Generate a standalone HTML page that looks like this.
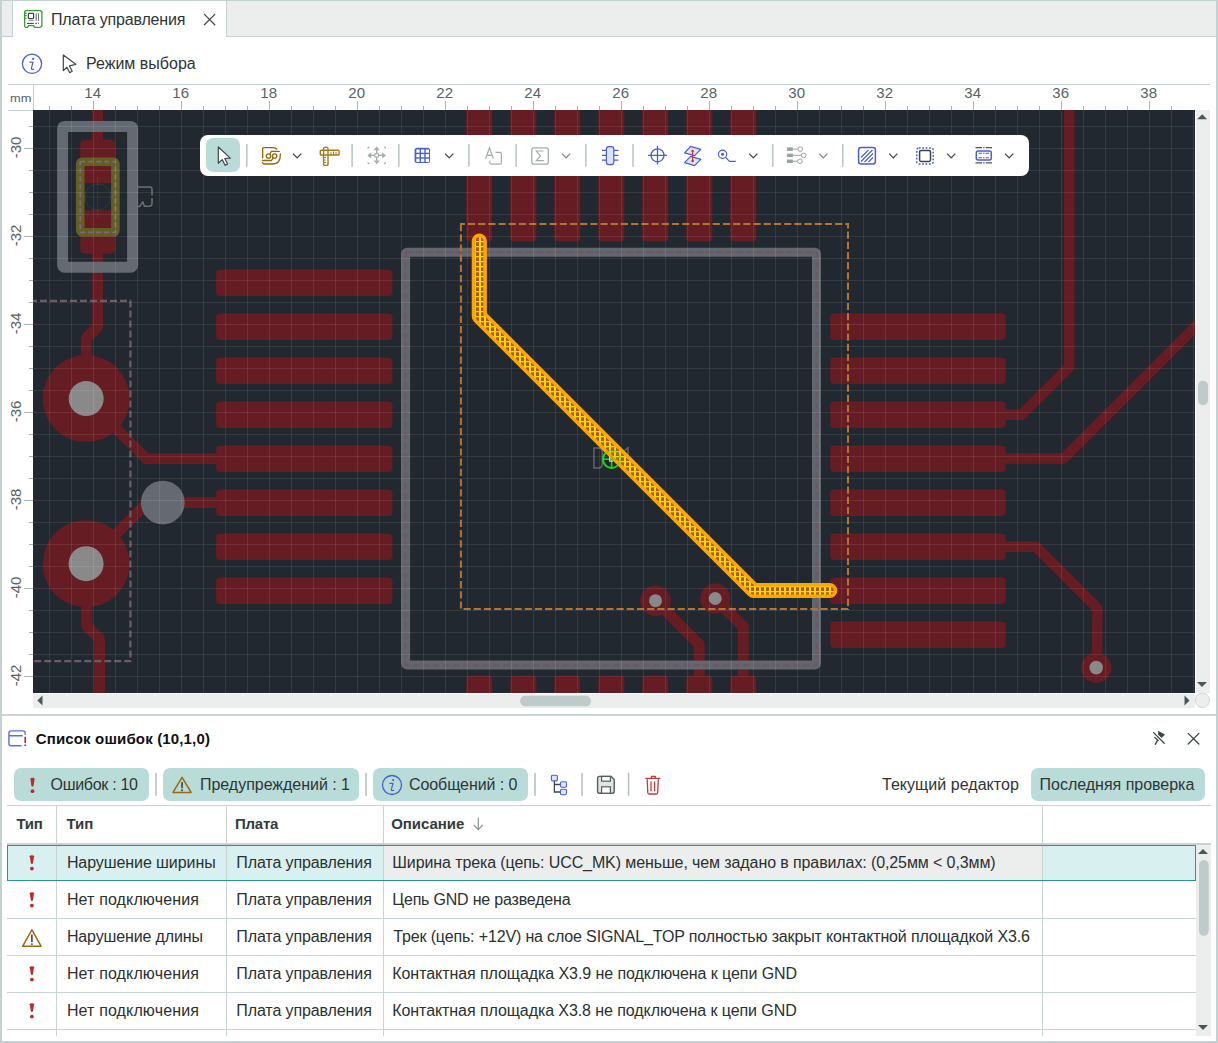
<!DOCTYPE html>
<html><head><meta charset="utf-8"><style>
html,body{margin:0;padding:0;}
body{width:1218px;height:1043px;position:relative;overflow:hidden;background:#fff;font-family:"Liberation Sans", sans-serif;}
</style></head><body>
<div style="position:absolute;left:0px;top:0px;width:1218px;height:37px;background:#ebeeed"></div><div style="position:absolute;left:0px;top:0px;width:1218px;height:1px;background:#c5d0d0"></div><div style="position:absolute;left:0px;top:36px;width:1218px;height:1px;background:#c5d0d0"></div><div style="position:absolute;left:12px;top:1px;width:214px;height:36px;background:#fff"></div><div style="position:absolute;left:12px;top:1px;width:1px;height:36px;background:#c5d0d0"></div><div style="position:absolute;left:226px;top:1px;width:1px;height:36px;background:#c5d0d0"></div><svg style="position:absolute;left:20px;top:6px;overflow:visible;" width="26" height="26" viewBox="20 6 26 26">
<path d="M25.5 10.7 H40.6 L41.9 12 V25.8 L40.3 27.4 H34.6 L33.4 25.6 H28.7 L27.5 27.4 H25.6 L24.6 26.4 V11.6 Z" fill="none" stroke="#3a9a3a" stroke-width="1.3" stroke-linejoin="round"/>
<path d="M24.8 13.4 h1.8 M24.8 15.6 h1.8 M24.8 18.2 h1.8" stroke="#2a8a2a" stroke-width="1.1"/>
<rect x="28.4" y="13.4" width="5.2" height="5.2" rx="0.8" fill="none" stroke="#3c4545" stroke-width="1.2"/>
<path d="M28.5 20.6 h5.3" stroke="#8a9393" stroke-width="1"/>
<path d="M27 23.4 h6.8" stroke="#3c4545" stroke-width="1.1"/>
<path d="M36.2 13.3 v7.5 M38.5 13.3 v7.5" stroke="#6a7373" stroke-width="1.1"/>
<path d="M35 23.4 h2 M38 23.4 h1" stroke="#6a7373" stroke-width="1.1"/>
</svg><div style="position:absolute;left:50.90px;top:12px;font-size:16px;line-height:16px;font-weight:400;color:#2d3535;letter-spacing:-0.173px;white-space:nowrap;">Плата управления</div><svg style="position:absolute;left:200px;top:12px;overflow:visible;" width="20" height="20" viewBox="200 12 20 20"><path d="M204.4 14.4 L214.8 24.8 M214.8 14.4 L204.4 24.8" stroke="#434b4b" stroke-width="1.3" stroke-linecap="round"/></svg><svg style="position:absolute;left:18px;top:50px;overflow:visible;" width="30" height="30" viewBox="18 50 30 30">
<circle cx="32" cy="63.8" r="9.6" fill="none" stroke="#4a5fcf" stroke-width="1.3"/>
<circle cx="33.2" cy="58.9" r="1.1" fill="#4a5fcf"/>
<path d="M29.9 62.2 H33 L31.4 68.2 Q31.1 69.5 32.4 69.3 L33.7 69.1" fill="none" stroke="#4a5fcf" stroke-width="1.2" stroke-linecap="round" stroke-linejoin="round"/>
</svg><svg style="position:absolute;left:58px;top:50px;overflow:visible;" width="24" height="26" viewBox="58 50 24 26"><path d="M63.3 55 L63.3 70.6 L66.9 67.2 L69.6 72.6 L72.2 71.3 L69.5 65.9 L75.8 64.3 Z" fill="#fff" stroke="#3d4848" stroke-width="1.2" stroke-linejoin="round"/></svg><div style="position:absolute;left:86.00px;top:56px;font-size:16px;line-height:16px;font-weight:400;color:#2d3535;letter-spacing:0.009px;white-space:nowrap;">Режим выбора</div><div style="position:absolute;left:8px;top:84px;width:1202px;height:1px;background:#c5d0d0"></div><div style="position:absolute;left:33px;top:85px;width:1px;height:25px;background:#c5d0d0"></div><div style="position:absolute;left:8px;top:110px;width:25px;height:1px;background:#c5d0d0"></div><div style="position:absolute;left:10.30px;top:93px;font-size:11px;line-height:11px;font-weight:400;color:#5a6262;letter-spacing:0.000px;white-space:nowrap;transform:scaleX(1.17);transform-origin:0 0">mm</div><svg style="position:absolute;left:0px;top:84px;overflow:visible;" width="1218" height="620" viewBox="0 84 1218 620"><rect x="49" y="106" width="1" height="4" fill="#a9b4b4"/><rect x="71" y="106" width="1" height="4" fill="#a9b4b4"/><rect x="93" y="101" width="1" height="9" fill="#a9b4b4"/><rect x="115" y="106" width="1" height="4" fill="#a9b4b4"/><rect x="137" y="106" width="1" height="4" fill="#a9b4b4"/><rect x="159" y="106" width="1" height="4" fill="#a9b4b4"/><rect x="181" y="101" width="1" height="9" fill="#a9b4b4"/><rect x="203" y="106" width="1" height="4" fill="#a9b4b4"/><rect x="225" y="106" width="1" height="4" fill="#a9b4b4"/><rect x="247" y="106" width="1" height="4" fill="#a9b4b4"/><rect x="269" y="101" width="1" height="9" fill="#a9b4b4"/><rect x="291" y="106" width="1" height="4" fill="#a9b4b4"/><rect x="313" y="106" width="1" height="4" fill="#a9b4b4"/><rect x="335" y="106" width="1" height="4" fill="#a9b4b4"/><rect x="357" y="101" width="1" height="9" fill="#a9b4b4"/><rect x="379" y="106" width="1" height="4" fill="#a9b4b4"/><rect x="401" y="106" width="1" height="4" fill="#a9b4b4"/><rect x="423" y="106" width="1" height="4" fill="#a9b4b4"/><rect x="445" y="101" width="1" height="9" fill="#a9b4b4"/><rect x="467" y="106" width="1" height="4" fill="#a9b4b4"/><rect x="489" y="106" width="1" height="4" fill="#a9b4b4"/><rect x="511" y="106" width="1" height="4" fill="#a9b4b4"/><rect x="533" y="101" width="1" height="9" fill="#a9b4b4"/><rect x="555" y="106" width="1" height="4" fill="#a9b4b4"/><rect x="577" y="106" width="1" height="4" fill="#a9b4b4"/><rect x="599" y="106" width="1" height="4" fill="#a9b4b4"/><rect x="621" y="101" width="1" height="9" fill="#a9b4b4"/><rect x="643" y="106" width="1" height="4" fill="#a9b4b4"/><rect x="665" y="106" width="1" height="4" fill="#a9b4b4"/><rect x="687" y="106" width="1" height="4" fill="#a9b4b4"/><rect x="709" y="101" width="1" height="9" fill="#a9b4b4"/><rect x="731" y="106" width="1" height="4" fill="#a9b4b4"/><rect x="753" y="106" width="1" height="4" fill="#a9b4b4"/><rect x="775" y="106" width="1" height="4" fill="#a9b4b4"/><rect x="797" y="101" width="1" height="9" fill="#a9b4b4"/><rect x="819" y="106" width="1" height="4" fill="#a9b4b4"/><rect x="841" y="106" width="1" height="4" fill="#a9b4b4"/><rect x="863" y="106" width="1" height="4" fill="#a9b4b4"/><rect x="885" y="101" width="1" height="9" fill="#a9b4b4"/><rect x="907" y="106" width="1" height="4" fill="#a9b4b4"/><rect x="929" y="106" width="1" height="4" fill="#a9b4b4"/><rect x="951" y="106" width="1" height="4" fill="#a9b4b4"/><rect x="973" y="101" width="1" height="9" fill="#a9b4b4"/><rect x="995" y="106" width="1" height="4" fill="#a9b4b4"/><rect x="1017" y="106" width="1" height="4" fill="#a9b4b4"/><rect x="1039" y="106" width="1" height="4" fill="#a9b4b4"/><rect x="1061" y="101" width="1" height="9" fill="#a9b4b4"/><rect x="1083" y="106" width="1" height="4" fill="#a9b4b4"/><rect x="1105" y="106" width="1" height="4" fill="#a9b4b4"/><rect x="1127" y="106" width="1" height="4" fill="#a9b4b4"/><rect x="1149" y="101" width="1" height="9" fill="#a9b4b4"/><rect x="1171" y="106" width="1" height="4" fill="#a9b4b4"/><rect x="29" y="126" width="4" height="1" fill="#a9b4b4"/><rect x="24" y="148" width="9" height="1" fill="#a9b4b4"/><rect x="29" y="170" width="4" height="1" fill="#a9b4b4"/><rect x="29" y="192" width="4" height="1" fill="#a9b4b4"/><rect x="29" y="214" width="4" height="1" fill="#a9b4b4"/><rect x="24" y="236" width="9" height="1" fill="#a9b4b4"/><rect x="29" y="258" width="4" height="1" fill="#a9b4b4"/><rect x="29" y="280" width="4" height="1" fill="#a9b4b4"/><rect x="29" y="302" width="4" height="1" fill="#a9b4b4"/><rect x="24" y="324" width="9" height="1" fill="#a9b4b4"/><rect x="29" y="346" width="4" height="1" fill="#a9b4b4"/><rect x="29" y="368" width="4" height="1" fill="#a9b4b4"/><rect x="29" y="390" width="4" height="1" fill="#a9b4b4"/><rect x="24" y="412" width="9" height="1" fill="#a9b4b4"/><rect x="29" y="434" width="4" height="1" fill="#a9b4b4"/><rect x="29" y="456" width="4" height="1" fill="#a9b4b4"/><rect x="29" y="478" width="4" height="1" fill="#a9b4b4"/><rect x="24" y="500" width="9" height="1" fill="#a9b4b4"/><rect x="29" y="522" width="4" height="1" fill="#a9b4b4"/><rect x="29" y="544" width="4" height="1" fill="#a9b4b4"/><rect x="29" y="566" width="4" height="1" fill="#a9b4b4"/><rect x="24" y="588" width="9" height="1" fill="#a9b4b4"/><rect x="29" y="610" width="4" height="1" fill="#a9b4b4"/><rect x="29" y="632" width="4" height="1" fill="#a9b4b4"/><rect x="29" y="654" width="4" height="1" fill="#a9b4b4"/><rect x="24" y="676" width="9" height="1" fill="#a9b4b4"/></svg><svg style="position:absolute;left:0px;top:84px;overflow:visible;" width="1218" height="620" viewBox="0 84 1218 620"><g font-family="Liberation Sans" font-size="15" fill="#5a6262"><text x="92.7" y="98" text-anchor="middle">14</text><text x="180.7" y="98" text-anchor="middle">16</text><text x="268.7" y="98" text-anchor="middle">18</text><text x="356.7" y="98" text-anchor="middle">20</text><text x="444.7" y="98" text-anchor="middle">22</text><text x="532.7" y="98" text-anchor="middle">24</text><text x="620.7" y="98" text-anchor="middle">26</text><text x="708.7" y="98" text-anchor="middle">28</text><text x="796.7" y="98" text-anchor="middle">30</text><text x="884.7" y="98" text-anchor="middle">32</text><text x="972.7" y="98" text-anchor="middle">34</text><text x="1060.7" y="98" text-anchor="middle">36</text><text x="1148.7" y="98" text-anchor="middle">38</text><text transform="translate(21 147.5) rotate(-90)" text-anchor="middle">-30</text><text transform="translate(21 235.5) rotate(-90)" text-anchor="middle">-32</text><text transform="translate(21 323.5) rotate(-90)" text-anchor="middle">-34</text><text transform="translate(21 411.5) rotate(-90)" text-anchor="middle">-36</text><text transform="translate(21 499.5) rotate(-90)" text-anchor="middle">-38</text><text transform="translate(21 587.5) rotate(-90)" text-anchor="middle">-40</text><text transform="translate(21 675.5) rotate(-90)" text-anchor="middle">-42</text></g></svg><svg style="position:absolute;left:33px;top:110px;overflow:visible;overflow:hidden" width="1162" height="583" viewBox="33 110 1162 583"><rect x="33" y="110" width="1162" height="583" fill="#22282f"/><path d="M97.6 104 L97.6 150" fill="none" stroke="#661c23" stroke-width="11" stroke-linejoin="round" stroke-linecap="butt"/><path d="M97.6 240 L97.6 327 L86.4 338.2 L86.4 398.6" fill="none" stroke="#661c23" stroke-width="11" stroke-linejoin="round" stroke-linecap="butt"/><path d="M86.2 398.6 L146.3 458.7 L216 458.7" fill="none" stroke="#661c23" stroke-width="10.5" stroke-linejoin="round" stroke-linecap="butt"/><path d="M86.1 563.7 L147.7 502.6 L216 502.6" fill="none" stroke="#661c23" stroke-width="10.8" stroke-linejoin="round" stroke-linecap="butt"/><path d="M86.7 563.7 L86.7 626 L99.6 639 L99.6 700" fill="none" stroke="#661c23" stroke-width="11" stroke-linejoin="round" stroke-linecap="butt"/><rect x="80.2" y="139.8" width="35.1" height="43.5" rx="5" fill="#661c23"/><rect x="80.2" y="210.2" width="35.1" height="43.6" rx="5" fill="#661c23"/><circle cx="86.2" cy="398.6" r="43.5" fill="#661c23"/><circle cx="86.2" cy="398.6" r="17.5" fill="#898989"/><circle cx="86.1" cy="563.7" r="43.5" fill="#661c23"/><circle cx="86.1" cy="563.7" r="17.5" fill="#898989"/><rect x="216.1" y="269.5" width="176.3" height="26.5" rx="4" fill="#661c23"/><rect x="216.1" y="313.5" width="176.3" height="26.5" rx="4" fill="#661c23"/><rect x="216.1" y="357.5" width="176.3" height="26.5" rx="4" fill="#661c23"/><rect x="216.1" y="401.5" width="176.3" height="26.5" rx="4" fill="#661c23"/><rect x="216.1" y="445.5" width="176.3" height="26.5" rx="4" fill="#661c23"/><rect x="216.1" y="489.5" width="176.3" height="26.5" rx="4" fill="#661c23"/><rect x="216.1" y="533.5" width="176.3" height="26.5" rx="4" fill="#661c23"/><rect x="216.1" y="577.5" width="176.3" height="26.5" rx="4" fill="#661c23"/><rect x="830.3" y="313.4" width="175.4" height="26.5" rx="4" fill="#661c23"/><rect x="830.3" y="357.4" width="175.4" height="26.5" rx="4" fill="#661c23"/><rect x="830.3" y="401.4" width="175.4" height="26.5" rx="4" fill="#661c23"/><rect x="830.3" y="445.4" width="175.4" height="26.5" rx="4" fill="#661c23"/><rect x="830.3" y="489.4" width="175.4" height="26.5" rx="4" fill="#661c23"/><rect x="830.3" y="533.4" width="175.4" height="26.5" rx="4" fill="#661c23"/><rect x="830.3" y="577.4" width="175.4" height="26.5" rx="4" fill="#661c23"/><rect x="830.3" y="621.4" width="175.4" height="26.5" rx="4" fill="#661c23"/><rect x="466.3" y="96" width="26" height="145.5" rx="4" fill="#661c23"/><rect x="466.3" y="675.7" width="26" height="40" rx="4" fill="#661c23"/><rect x="510.3" y="96" width="26" height="145.5" rx="4" fill="#661c23"/><rect x="510.3" y="675.7" width="26" height="40" rx="4" fill="#661c23"/><rect x="554.3" y="96" width="26" height="145.5" rx="4" fill="#661c23"/><rect x="554.3" y="675.7" width="26" height="40" rx="4" fill="#661c23"/><rect x="598.3" y="96" width="26" height="145.5" rx="4" fill="#661c23"/><rect x="598.3" y="675.7" width="26" height="40" rx="4" fill="#661c23"/><rect x="642.3" y="96" width="26" height="145.5" rx="4" fill="#661c23"/><rect x="642.3" y="675.7" width="26" height="40" rx="4" fill="#661c23"/><rect x="686.3" y="96" width="26" height="145.5" rx="4" fill="#661c23"/><rect x="686.3" y="675.7" width="26" height="40" rx="4" fill="#661c23"/><rect x="730.3" y="96" width="26" height="145.5" rx="4" fill="#661c23"/><rect x="730.3" y="675.7" width="26" height="40" rx="4" fill="#661c23"/><path d="M655.5 600.7 L699.2 644.4 L699.2 700" fill="none" stroke="#661c23" stroke-width="11" stroke-linejoin="round" stroke-linecap="butt"/><path d="M715.2 598.5 L743.2 626.5 L743.2 700" fill="none" stroke="#661c23" stroke-width="11" stroke-linejoin="round" stroke-linecap="butt"/><path d="M1069.2 100 L1069.2 367 L1021.5 414.7 L1000 414.7" fill="none" stroke="#661c23" stroke-width="10.5" stroke-linejoin="round" stroke-linecap="butt"/><path d="M1000 458.4 L1063.7 458.4 L1215 307.1" fill="none" stroke="#661c23" stroke-width="10.5" stroke-linejoin="round" stroke-linecap="butt"/><path d="M1000 546.8 L1036 546.8 L1097.4 608.4 L1097 667.6" fill="none" stroke="#661c23" stroke-width="10.5" stroke-linejoin="round" stroke-linecap="butt"/><circle cx="655.5" cy="600.7" r="15.3" fill="#661c23"/><circle cx="655.5" cy="600.7" r="6.5" fill="#898989"/><circle cx="715.2" cy="598.5" r="15.1" fill="#661c23"/><circle cx="715.2" cy="598.5" r="6.5" fill="#898989"/><circle cx="1096.2" cy="667.6" r="15.1" fill="#661c23"/><circle cx="1096.2" cy="667.6" r="6.8" fill="#898989"/><circle cx="162.8" cy="502.6" r="21.9" fill="#656a72"/><path d="M20 300.8 H130.4 V661.2 H20" fill="none" stroke="#6b5c65" stroke-width="2.2" stroke-dasharray="7 3"/><rect x="62.6" y="126.4" width="70" height="140.9" rx="2" fill="none" stroke="#656a72" stroke-width="11"/><rect x="80.2" y="161.7" width="35.2" height="70.6" rx="2" fill="none" stroke="#625f22" stroke-width="8.6"/><rect x="80.2" y="161.7" width="35.2" height="70.6" fill="none" stroke="#7d6b7b" stroke-width="1.8" stroke-dasharray="5 3"/><circle cx="97.7" cy="197" r="13" fill="none" stroke="#ffffff" stroke-opacity="0.07" stroke-width="1"/><path d="M97.7 176 V218 M82 197 H113" stroke="#ffffff" stroke-opacity="0.07" stroke-width="1"/><path d="M137 187 H150 Q152 187 152 189.5 V195.4 M152 198 V203.5 Q152 206.2 149.3 206.2 H144.4 L142.8 201.8 L139.6 206.5 H137" fill="none" stroke="#6b7070" stroke-width="1.5" stroke-linejoin="round"/><rect x="405.6" y="252.3" width="410.9" height="412.8" rx="1.5" fill="none" stroke="#62676e" stroke-width="9"/><path d="M405.6 252.3 V665.1 H816.5 V252.3 Z" fill="none" stroke="#6c5865" stroke-width="2.2" stroke-dasharray="6.8 3.2"/><path d="M460.9 224 V609 H848 V224 Z" fill="none" stroke="#b3742f" stroke-width="2" stroke-dasharray="7.2 3"/><path d="M593.9 447.9 H598.5 Q602.3 447.9 602.3 452.5 V463.5 Q602.3 468 598.5 468 H593.9 Z" fill="none" stroke="#5f6365" stroke-width="1.5"/><path d="M624.5 450.5 L628 447.8 V468" fill="none" stroke="#5f6365" stroke-width="1.5"/><circle cx="611.6" cy="459.2" r="8.7" fill="none" stroke="#22cc22" stroke-width="2"/><path d="M602.5 459.2 H620.5 M611.6 450.5 V468" stroke="#22cc22" stroke-width="1.5"/><path d="M49.5 110V693 M71.5 110V693 M93.5 110V693 M115.5 110V693 M137.5 110V693 M159.5 110V693 M181.5 110V693 M203.5 110V693 M225.5 110V693 M247.5 110V693 M269.5 110V693 M291.5 110V693 M313.5 110V693 M335.5 110V693 M357.5 110V693 M379.5 110V693 M401.5 110V693 M423.5 110V693 M445.5 110V693 M467.5 110V693 M489.5 110V693 M511.5 110V693 M533.5 110V693 M555.5 110V693 M577.5 110V693 M599.5 110V693 M621.5 110V693 M643.5 110V693 M665.5 110V693 M687.5 110V693 M709.5 110V693 M731.5 110V693 M753.5 110V693 M775.5 110V693 M797.5 110V693 M819.5 110V693 M841.5 110V693 M863.5 110V693 M885.5 110V693 M907.5 110V693 M929.5 110V693 M951.5 110V693 M973.5 110V693 M995.5 110V693 M1017.5 110V693 M1039.5 110V693 M1061.5 110V693 M1083.5 110V693 M1105.5 110V693 M1127.5 110V693 M1149.5 110V693 M1171.5 110V693 M1193.5 110V693 M33 126.5H1195 M33 148.5H1195 M33 170.5H1195 M33 192.5H1195 M33 214.5H1195 M33 236.5H1195 M33 258.5H1195 M33 280.5H1195 M33 302.5H1195 M33 324.5H1195 M33 346.5H1195 M33 368.5H1195 M33 390.5H1195 M33 412.5H1195 M33 434.5H1195 M33 456.5H1195 M33 478.5H1195 M33 500.5H1195 M33 522.5H1195 M33 544.5H1195 M33 566.5H1195 M33 588.5H1195 M33 610.5H1195 M33 632.5H1195 M33 654.5H1195 M33 676.5H1195" stroke="#ffffff" stroke-opacity="0.085" stroke-width="1"/><defs><pattern id="hatch" patternUnits="userSpaceOnUse" x="-1" y="1" width="5" height="5"><rect width="5" height="5" fill="#aa5a10"/><rect width="2" height="5" fill="#ffd700"/><rect width="5" height="1.3" fill="#ffd700"/></pattern></defs><path d="M479.3 241 L479.3 316.3 L753.5 590.5 L829.7 590.5" fill="none" stroke="#ffa400" stroke-width="15.2" stroke-linejoin="round" stroke-linecap="round"/><path d="M479.3 241 L479.3 316.3 L753.5 590.5 L829.7 590.5" fill="none" stroke="url(#hatch)" stroke-width="8" stroke-linejoin="round" stroke-linecap="round"/><g opacity="0.4"><circle cx="611.6" cy="459.2" r="8.7" fill="none" stroke="#22cc22" stroke-width="2"/><path d="M602.5 459.2 H620.5 M611.6 450.5 V468" stroke="#22cc22" stroke-width="1.5"/></g><path d="M609.6 456.6 V461.2 H613" fill="none" stroke="#e8ffe8" stroke-width="1.2" opacity="0.8"/></svg><div style="position:absolute;left:1196px;top:110px;width:14px;height:583px;background:#ebeeed"></div><div style="position:absolute;left:33px;top:693.5px;width:1162px;height:14.3px;background:#ebeeed"></div><svg style="position:absolute;left:1190px;top:105px;overflow:visible;" width="28" height="600" viewBox="1190 105 28 600">
<path d="M1197.2 119.3 L1202.2 114.2 L1207.2 119.3 Z" fill="#4d5757"/>
<rect x="1198" y="380.7" width="10" height="24.4" rx="5" fill="#bfcaca"/>
<path d="M1197 682 L1202 687.1 L1207 682 Z" fill="#4d5757"/>
<circle cx="1202.4" cy="700.4" r="7.2" fill="#ebeeed" stroke="#c9d3d3" stroke-width="0.9"/>
</svg><svg style="position:absolute;left:30px;top:690px;overflow:visible;" width="1170" height="20" viewBox="30 690 1170 20">
<path d="M42.5 695.5 L37.4 700.5 L42.5 705.5 Z" fill="#4d5757"/>
<rect x="520.1" y="695.8" width="70.9" height="10.4" rx="5.2" fill="#bfcaca"/>
<path d="M1184.5 695.5 L1189.6 700.5 L1184.5 705.5 Z" fill="#4d5757"/>
</svg><div style="position:absolute;left:200px;top:135px;width:829px;height:41px;background:#fff;border-radius:8px"></div><div style="position:absolute;left:206.4px;top:138.4px;width:34px;height:33.8px;background:#b9dcd9;border-radius:7px"></div><svg style="position:absolute;left:195px;top:130px;overflow:visible;" width="840" height="52" viewBox="195 130 840 52"><rect x="246.05" y="144" width="1.5" height="22.8" fill="#b9c4c4"/><rect x="351.35" y="144" width="1.5" height="22.8" fill="#b9c4c4"/><rect x="398.05" y="144" width="1.5" height="22.8" fill="#b9c4c4"/><rect x="468.15" y="144" width="1.5" height="22.8" fill="#b9c4c4"/><rect x="515.35" y="144" width="1.5" height="22.8" fill="#b9c4c4"/><rect x="585.15" y="144" width="1.5" height="22.8" fill="#b9c4c4"/><rect x="632.25" y="144" width="1.5" height="22.8" fill="#b9c4c4"/><rect x="772.05" y="144" width="1.5" height="22.8" fill="#b9c4c4"/><rect x="842.05" y="144" width="1.5" height="22.8" fill="#b9c4c4"/><path d="M218.3 147 L218.3 163.3 L222.2 159.6 L225.1 165.3 L227.6 164.1 L224.8 158.5 L230.3 158.1 Z" fill="#fff" stroke="#3d4848" stroke-width="1.2" stroke-linejoin="round"/><g fill="none" stroke="#8f6a14" stroke-width="1.3" stroke-linecap="round" stroke-linejoin="round">
<path d="M262.7 157.8 V148.6 Q262.7 147.6 263.8 147.6 H273.2 Q275.3 147.8 276.7 149"/>
<path d="M280.4 154 Q280.6 164 272.6 164 H263.8 L262.5 162.8"/>
<circle cx="268.5" cy="156" r="2.2"/><circle cx="274.6" cy="156" r="2.2"/>
<path d="M269.8 154.2 L271.4 151.4 H279.3 M273.3 157.8 L271.6 160.5 H262.4"/>
</g><path d="M293 153.6 L297.1 157.9 L301.2 153.6" fill="none" stroke="#3d4848" stroke-width="1.3"/><g fill="none" stroke="#a97a1c" stroke-width="1.4" stroke-linejoin="round">
<rect x="323.6" y="147.4" width="4.4" height="18" rx="0.8"/>
<rect x="320.3" y="150.2" width="18.8" height="4.8" rx="0.8"/>
<path d="M331 152.2 V155 M333.5 151.5 V155 M336 152.2 V155 M323.6 157.5 H326 M323.6 160 H325.5 M323.6 162.5 H326" stroke-width="1"/>
</g><g fill="#a3adad">
<path d="M376.7 146.5 L379.8 150.3 H373.6 Z M376.7 164.3 L379.8 160.5 H373.6 Z M367.4 155.4 L371.2 152.3 V158.5 Z M386 155.4 L382.2 152.3 V158.5 Z"/>
<rect x="371" y="154.7" width="11.4" height="1.3"/><rect x="376" y="150" width="1.3" height="10.8"/>
</g>
<rect x="375" y="153.7" width="3.4" height="3.4" fill="#fff" stroke="#a3adad" stroke-width="1"/>
<path d="M368 147.3 h1.5 M368 147.3 v1.5 M385.4 147.3 h-1.5 M385.4 147.3 v1.5 M368 163.5 h1.5 M368 163.5 v-1.5 M385.4 163.5 h-1.5 M385.4 163.5 v-1.5" stroke="#a3adad" stroke-width="1"/><rect x="414.6" y="147.8" width="15.4" height="15.2" rx="2.5" fill="#4a5fcf"/>
<g fill="#fff"><rect x="416.3" y="149.5" width="3.3" height="3.2"/><rect x="416.3" y="154.1" width="3.3" height="3.2"/><rect x="416.3" y="158.7" width="3.3" height="3.2"/><rect x="421.0" y="149.5" width="3.3" height="3.2"/><rect x="421.0" y="154.1" width="3.3" height="3.2"/><rect x="421.0" y="158.7" width="3.3" height="3.2"/><rect x="425.7" y="149.5" width="3.3" height="3.2"/><rect x="425.7" y="154.1" width="3.3" height="3.2"/><rect x="425.7" y="158.7" width="3.3" height="3.2"/></g><path d="M445.1 153.6 L449.20000000000005 157.9 L453.3 153.6" fill="none" stroke="#3d4848" stroke-width="1.3"/><g fill="none" stroke="#a3adad" stroke-width="1.2">
<path d="M485.6 158.8 L489.5 147.8 L493.4 158.8 M486.8 155.4 H492.2"/>
<path d="M495.5 152.4 H500 Q501.4 152.4 501.4 153.8 V162.7 Q501.4 164.1 500 164.1 H491.2 Q489.8 164.1 489.8 162.7 V160.8"/>
</g><rect x="531.8" y="147.8" width="16.5" height="16.3" rx="2.2" fill="none" stroke="#a3adad" stroke-width="1.3"/>
<path d="M543.5 151 H536.3 L540.4 155.9 L536.3 160.6 H543.8" fill="none" stroke="#a3adad" stroke-width="1.2"/><path d="M562 153.6 L566.1 157.9 L570.2 153.6" fill="none" stroke="#7e8888" stroke-width="1.3"/><path d="M602 150.3 H618.4 M602 155.4 H618.4 M602 160.2 H618.4" stroke="#4a5fcf" stroke-width="1.2"/>
<rect x="606.4" y="146.6" width="7.4" height="18" rx="2.4" fill="#dce3fa" stroke="#4a5fcf" stroke-width="1.2"/><circle cx="657.5" cy="155.3" r="6.5" fill="none" stroke="#4a5fcf" stroke-width="1.3"/>
<path d="M648.1 155.3 H667 M657.5 146 V164.6" stroke="#4a5fcf" stroke-width="1.3"/><g fill="#dce3fa" stroke="#4a5fcf" stroke-width="1.2" stroke-linejoin="round">
<path d="M684.6 152.8 L690.6 146.4 L700.8 149.4 L694.6 155.7 Z"/>
<path d="M684.6 162.6 L690.6 156.4 L700.8 159.4 L694.6 165.6 Z"/>
</g>
<path d="M692.6 150.8 V161" stroke="#c83232" stroke-width="1.2"/>
<circle cx="692.6" cy="151" r="1.3" fill="#c83232"/><circle cx="692.6" cy="161" r="1.3" fill="#c83232"/><circle cx="722.6" cy="154.3" r="4.1" fill="none" stroke="#4a5fcf" stroke-width="1.2"/>
<circle cx="722.6" cy="154.3" r="1.5" fill="#4a5fcf"/>
<path d="M725.6 157.3 L729.5 161.4 H735.8" fill="none" stroke="#4a5fcf" stroke-width="1.2"/><path d="M749.2 153.6 L753.3000000000001 157.9 L757.4000000000001 153.6" fill="none" stroke="#3d4848" stroke-width="1.3"/><g fill="#9aa3a3">
<rect x="786.9" y="147.4" width="6" height="3.5"/><rect x="786.9" y="153.6" width="6" height="3.5"/><rect x="786.9" y="159.5" width="6" height="3.5"/>
</g>
<g fill="none" stroke="#9aa3a3" stroke-width="1">
<path d="M792.9 149.1 H797.9 M792.9 155.3 H801.3 M792.9 161.2 H797.6"/>
<circle cx="800.3" cy="149.1" r="2.3"/><circle cx="803.7" cy="155.3" r="2.3"/><circle cx="800" cy="161.2" r="2.3"/>
</g><path d="M819.2 153.6 L823.3000000000001 157.9 L827.4000000000001 153.6" fill="none" stroke="#7e8888" stroke-width="1.3"/><rect x="858.6" y="147.6" width="16.8" height="16.4" rx="2.5" fill="none" stroke="#4a5fcf" stroke-width="1.5"/>
<path d="M861 157.5 L868.5 150 M861 161.5 L872.5 150 M864.5 162 L873 153.5 M868.5 162 L873 157.5" stroke="#4a5fcf" stroke-width="1.1"/><path d="M889.2 153.6 L893.3000000000001 157.9 L897.4000000000001 153.6" fill="none" stroke="#3d4848" stroke-width="1.3"/><rect x="916.8" y="147.9" width="16.4" height="16" rx="2" fill="none" stroke="#4a5fcf" stroke-width="1.5" stroke-dasharray="1.8 1.6"/>
<rect x="919.6" y="150.6" width="10.9" height="10.8" rx="1.3" fill="none" stroke="#3d4545" stroke-width="1.5"/><path d="M947.1 153.6 L951.2 157.9 L955.3000000000001 153.6" fill="none" stroke="#3d4848" stroke-width="1.3"/><rect x="976.3" y="150.9" width="15" height="9" rx="1.8" fill="none" stroke="#4a5fcf" stroke-width="1.5"/>
<path d="M975.5 147.6 H982 M983.2 147.6 H984.6 M985.8 147.6 H992 M975.5 162.9 H982 M983.2 162.9 H984.6 M985.8 162.9 H992" stroke="#4d5555" stroke-width="1.4"/>
<path d="M978.5 153.2 H982 M983 153.2 H984.5 M985.5 153.2 H989 M978.5 157.7 H982 M983 157.7 H984.5 M985.5 157.7 H989" stroke="#5d6565" stroke-width="1.1"/><path d="M1005 153.6 L1009.1 157.9 L1013.2 153.6" fill="none" stroke="#3d4848" stroke-width="1.3"/></svg><div style="position:absolute;left:2px;top:714px;width:1214px;height:2px;background:#c9d3d3"></div><svg style="position:absolute;left:4px;top:724px;overflow:visible;" width="30" height="30" viewBox="4 724 30 30">
<path d="M25.2 734.8 V733.2 Q25.2 730.9 22.9 730.9 H11.2 Q8.9 730.9 8.9 733.2 V743.5 Q8.9 745.8 11.2 745.8 H21.5 M8.9 735.7 H22.8" fill="none" stroke="#5a70d0" stroke-width="1.4"/>
<path d="M25.2 737.4 V742.5" stroke="#b82a2a" stroke-width="1.6" stroke-linecap="round"/>
<circle cx="25.2" cy="745.2" r="0.9" fill="#b82a2a"/>
</svg><div style="position:absolute;left:35.75px;top:731px;font-size:15px;line-height:15px;font-weight:700;color:#111;letter-spacing:0.150px;white-space:nowrap;">Список ошибок (10,1,0)</div><svg style="position:absolute;left:1145px;top:725px;overflow:visible;" width="65" height="25" viewBox="1145 725 65 25">
<path d="M1158.4 731.4 L1164.6 734.7 L1161.5 737.6 L1158.5 734.5 Z" fill="#3d4545" stroke="#3d4545" stroke-width="0.8" stroke-linejoin="round"/>
<path d="M1153.6 732.6 L1164.2 743.2" stroke="#3d4545" stroke-width="1.3" stroke-linecap="round"/>
<path d="M1154.8 737.6 L1158.2 740.4 M1157.4 740.6 L1155.3 744.4" stroke="#3d4545" stroke-width="1.3" stroke-linecap="round"/>
<path d="M1188.2 733.4 L1198.9 744 M1198.9 733.4 L1188.2 744" stroke="#3d4545" stroke-width="1.3" stroke-linecap="round"/>
</svg><div style="position:absolute;left:14px;top:767.5px;width:135.3px;height:33.8px;background:#b9dcd9;border-radius:7px"></div><div style="position:absolute;left:162.6px;top:767.5px;width:196.5px;height:33.8px;background:#b9dcd9;border-radius:7px"></div><div style="position:absolute;left:372.6px;top:767.5px;width:155.7px;height:33.8px;background:#b9dcd9;border-radius:7px"></div><div style="position:absolute;left:1030.6px;top:767.5px;width:174.2px;height:33.7px;background:#b9dcd9;border-radius:7px"></div><svg style="position:absolute;left:0px;top:760px;overflow:visible;" width="700" height="45" viewBox="0 760 700 45"><rect x="155.25" y="773" width="1.5" height="22.8" fill="#b3bebe"/><rect x="365.25" y="773" width="1.5" height="22.8" fill="#b3bebe"/><rect x="534.25" y="773" width="1.5" height="22.8" fill="#b3bebe"/><rect x="581.25" y="773" width="1.5" height="22.8" fill="#b3bebe"/><rect x="627.85" y="773" width="1.5" height="22.8" fill="#b3bebe"/><path d="M30.35 778.9000000000001 Q30.35 777.7 32.5 777.7 Q34.65 777.7 34.65 778.9000000000001 L33.55 785.9000000000001 Q32.5 787.0 31.45 785.9000000000001 Z" fill="#bd2a2c"/><circle cx="32.5" cy="791.1500000000001" r="1.9" fill="#bd2a2c"/><path d="M182.05 777.3 L191.1 792.4000000000001 H173.0 Z" fill="none" stroke="#9a6a12" stroke-width="1.5" stroke-linejoin="round"/><path d="M182.05 782.0 V788.2" stroke="#3a4040" stroke-width="1.6"/><circle cx="182.05" cy="790.3000000000001" r="0.95" fill="#3a4040"/><circle cx="392" cy="785" r="9.5" fill="none" stroke="#4a5fcf" stroke-width="1.3"/>
<circle cx="393.2" cy="780.1" r="1.1" fill="#4a5fcf"/>
<path d="M389.9 783.4 H393 L391.4 789.4 Q391.1 790.7 392.4 790.5 L393.7 790.3" fill="none" stroke="#4a5fcf" stroke-width="1.2" stroke-linecap="round" stroke-linejoin="round"/><path d="M554.4 781 V792 H560.3 M554.4 784.5 H560.3" fill="none" stroke="#3d4545" stroke-width="1.3"/>
<g fill="#dce3fa" stroke="#4a5fcf" stroke-width="1.1">
<rect x="551.4" y="775.3" width="6" height="5.6" rx="1.2"/>
<rect x="560.5" y="781.7" width="6" height="5.6" rx="1.2"/>
<rect x="560.5" y="789.2" width="6" height="5.6" rx="1.2"/>
</g><path d="M599 776.4 H611.2 L614.2 779.4 V791.4 Q614.2 793.2 612.4 793.2 H599.4 Q597.6 793.2 597.6 791.4 V778.2 Q597.6 776.4 599.4 776.4 Z" fill="#dfe5e5" stroke="#555e5e" stroke-width="1.4" stroke-linejoin="round"/>
<rect x="601.6" y="776.4" width="8.8" height="4.8" fill="#fff" stroke="#555e5e" stroke-width="1.2"/>
<rect x="601.6" y="786.8" width="8.8" height="6.4" fill="#fff" stroke="#555e5e" stroke-width="1.2"/><g fill="none" stroke="#c0393b" stroke-width="1.3" stroke-linejoin="round">
<path d="M645.3 778.4 H660.3 M651.4 778.2 V776.3 H655.3 V778.2"/>
<path d="M647.2 779.3 L647.8 792.8 Q647.9 794 649.1 794 H656.4 Q657.6 794 657.7 792.8 L658.3 779.3"/>
<path d="M651 781.5 V791.2 M654.6 781.5 V791.2"/>
</g></svg><div style="position:absolute;left:50.50px;top:777px;font-size:16px;line-height:16px;font-weight:400;color:#2d3535;letter-spacing:-0.300px;white-space:nowrap;">Ошибок : 10</div><div style="position:absolute;left:200.00px;top:777px;font-size:16px;line-height:16px;font-weight:400;color:#2d3535;letter-spacing:-0.029px;white-space:nowrap;">Предупреждений : 1</div><div style="position:absolute;left:409.00px;top:777px;font-size:16px;line-height:16px;font-weight:400;color:#2d3535;letter-spacing:-0.083px;white-space:nowrap;">Сообщений : 0</div><div style="position:absolute;left:882.00px;top:777px;font-size:16px;line-height:16px;font-weight:400;color:#2d3535;letter-spacing:0.040px;white-space:nowrap;">Текущий редактор</div><div style="position:absolute;left:1039.60px;top:777px;font-size:16px;line-height:16px;font-weight:400;color:#2d3535;letter-spacing:-0.018px;white-space:nowrap;">Последняя проверка</div><div style="position:absolute;left:7px;top:805px;width:1204px;height:1px;background:#c9d3d3"></div><div style="position:absolute;left:7px;top:842.5px;width:1204px;height:2px;background:#c9d3d3"></div><div style="position:absolute;left:56px;top:806px;width:1px;height:230px;background:#c9d3d3"></div><div style="position:absolute;left:226px;top:806px;width:1px;height:230px;background:#c9d3d3"></div><div style="position:absolute;left:383px;top:806px;width:1px;height:230px;background:#c9d3d3"></div><div style="position:absolute;left:1042px;top:806px;width:1px;height:230px;background:#c9d3d3"></div><div style="position:absolute;left:16.40px;top:816px;font-size:15px;line-height:15px;font-weight:700;color:#333b3b;letter-spacing:-0.250px;white-space:nowrap;">Тип</div><div style="position:absolute;left:66.50px;top:816px;font-size:15px;line-height:15px;font-weight:700;color:#333b3b;letter-spacing:-0.050px;white-space:nowrap;">Тип</div><div style="position:absolute;left:235.00px;top:816px;font-size:15px;line-height:15px;font-weight:700;color:#333b3b;letter-spacing:-0.250px;white-space:nowrap;">Плата</div><div style="position:absolute;left:391.20px;top:816px;font-size:15px;line-height:15px;font-weight:700;color:#333b3b;letter-spacing:-0.043px;white-space:nowrap;">Описание</div><svg style="position:absolute;left:470px;top:815px;overflow:visible;" width="20" height="20" viewBox="470 815 20 20"><path d="M478.3 817.5 V829.5 M473.8 825 L478.3 829.6 L482.8 825" fill="none" stroke="#8a9494" stroke-width="1.2"/></svg><div style="position:absolute;left:7.5px;top:845px;width:1187.5px;height:35.8px;background:#d8f0ef"></div><div style="position:absolute;left:383.5px;top:845px;width:659px;height:35.8px;background:#ebeeed"></div><div style="position:absolute;left:56px;top:845px;width:1px;height:36px;background:#c9d3d3"></div><div style="position:absolute;left:226px;top:845px;width:1px;height:36px;background:#c9d3d3"></div><div style="position:absolute;left:383px;top:845px;width:1px;height:36px;background:#c9d3d3"></div><div style="position:absolute;left:1042px;top:845px;width:1px;height:36px;background:#c9d3d3"></div><div style="position:absolute;left:7px;top:844.5px;width:1188.5px;height:36.8px;border:1px solid #2a948f;box-sizing:border-box"></div><div style="position:absolute;left:7px;top:918px;width:1189px;height:1px;background:#c9d3d3"></div><div style="position:absolute;left:7px;top:955px;width:1189px;height:1px;background:#c9d3d3"></div><div style="position:absolute;left:7px;top:992px;width:1189px;height:1px;background:#c9d3d3"></div><div style="position:absolute;left:7px;top:1029px;width:1189px;height:1px;background:#c9d3d3"></div><div style="position:absolute;left:66.90px;top:855px;font-size:16px;line-height:16px;font-weight:400;color:#2b3030;letter-spacing:-0.080px;white-space:nowrap;">Нарушение ширины</div><div style="position:absolute;left:236.30px;top:855px;font-size:16px;line-height:16px;font-weight:400;color:#2b3030;letter-spacing:-0.107px;white-space:nowrap;">Плата управления</div><div style="position:absolute;left:392.30px;top:855px;font-size:16px;line-height:16px;font-weight:400;color:#2b3030;letter-spacing:-0.105px;white-space:nowrap;">Ширина трека (цепь: UCC_MK) меньше, чем задано в правилах: (0,25мм &lt; 0,3мм)</div><div style="position:absolute;left:66.90px;top:892px;font-size:16px;line-height:16px;font-weight:400;color:#2b3030;letter-spacing:0.136px;white-space:nowrap;">Нет подключения</div><div style="position:absolute;left:236.30px;top:892px;font-size:16px;line-height:16px;font-weight:400;color:#2b3030;letter-spacing:-0.107px;white-space:nowrap;">Плата управления</div><div style="position:absolute;left:392.30px;top:892px;font-size:16px;line-height:16px;font-weight:400;color:#2b3030;letter-spacing:-0.195px;white-space:nowrap;">Цепь GND не разведена</div><div style="position:absolute;left:66.90px;top:929px;font-size:16px;line-height:16px;font-weight:400;color:#2b3030;letter-spacing:-0.129px;white-space:nowrap;">Нарушение длины</div><div style="position:absolute;left:236.30px;top:929px;font-size:16px;line-height:16px;font-weight:400;color:#2b3030;letter-spacing:-0.107px;white-space:nowrap;">Плата управления</div><div style="position:absolute;left:393.30px;top:929px;font-size:16px;line-height:16px;font-weight:400;color:#2b3030;letter-spacing:-0.151px;white-space:nowrap;">Трек (цепь: +12V) на слое SIGNAL_TOP полностью закрыт контактной площадкой X3.6</div><div style="position:absolute;left:66.90px;top:966px;font-size:16px;line-height:16px;font-weight:400;color:#2b3030;letter-spacing:0.136px;white-space:nowrap;">Нет подключения</div><div style="position:absolute;left:236.30px;top:966px;font-size:16px;line-height:16px;font-weight:400;color:#2b3030;letter-spacing:-0.107px;white-space:nowrap;">Плата управления</div><div style="position:absolute;left:392.30px;top:966px;font-size:16px;line-height:16px;font-weight:400;color:#2b3030;letter-spacing:-0.071px;white-space:nowrap;">Контактная площадка X3.9 не подключена к цепи GND</div><div style="position:absolute;left:66.90px;top:1003px;font-size:16px;line-height:16px;font-weight:400;color:#2b3030;letter-spacing:0.136px;white-space:nowrap;">Нет подключения</div><div style="position:absolute;left:236.30px;top:1003px;font-size:16px;line-height:16px;font-weight:400;color:#2b3030;letter-spacing:-0.107px;white-space:nowrap;">Плата управления</div><div style="position:absolute;left:392.30px;top:1003px;font-size:16px;line-height:16px;font-weight:400;color:#2b3030;letter-spacing:-0.079px;white-space:nowrap;">Контактная площадка X3.8 не подключена к цепи GND</div><svg style="position:absolute;left:0px;top:845px;overflow:visible;" width="60" height="190" viewBox="0 845 60 190"><path d="M29.75 856.35 Q29.75 855.15 31.9 855.15 Q34.05 855.15 34.05 856.35 L32.949999999999996 863.35 Q31.9 864.4499999999999 30.849999999999998 863.35 Z" fill="#bd2a2c"/><circle cx="31.9" cy="868.6" r="1.9" fill="#bd2a2c"/><path d="M29.75 893.35 Q29.75 892.15 31.9 892.15 Q34.05 892.15 34.05 893.35 L32.949999999999996 900.35 Q31.9 901.4499999999999 30.849999999999998 900.35 Z" fill="#bd2a2c"/><circle cx="31.9" cy="905.6" r="1.9" fill="#bd2a2c"/><path d="M31.9 929.8 L41.1 946.2 H22.7 Z" fill="none" stroke="#9a6a12" stroke-width="1.5" stroke-linejoin="round"/><path d="M31.9 934.5 V942.0" stroke="#3a4040" stroke-width="1.6"/><circle cx="31.9" cy="944.1" r="0.95" fill="#3a4040"/><path d="M29.75 967.35 Q29.75 966.15 31.9 966.15 Q34.05 966.15 34.05 967.35 L32.949999999999996 974.35 Q31.9 975.4499999999999 30.849999999999998 974.35 Z" fill="#bd2a2c"/><circle cx="31.9" cy="979.6" r="1.9" fill="#bd2a2c"/><path d="M29.75 1004.35 Q29.75 1003.15 31.9 1003.15 Q34.05 1003.15 34.05 1004.35 L32.949999999999996 1011.35 Q31.9 1012.4499999999999 30.849999999999998 1011.35 Z" fill="#bd2a2c"/><circle cx="31.9" cy="1016.6" r="1.9" fill="#bd2a2c"/></svg><div style="position:absolute;left:1196px;top:845px;width:15px;height:191px;background:#ebeeed"></div><svg style="position:absolute;left:1190px;top:840px;overflow:visible;" width="28" height="200" viewBox="1190 840 28 200">
<path d="M1198 854 L1203 849 L1208 854 Z" fill="#4d5757"/>
<rect x="1199" y="860" width="9.7" height="75.8" rx="4.85" fill="#bfcaca"/>
<path d="M1198 1025 L1203 1030 L1208 1025 Z" fill="#4d5757"/>
</svg><div style="position:absolute;left:0px;top:0px;width:2px;height:1043px;background:#c5d0d0"></div><div style="position:absolute;left:1216px;top:0px;width:2px;height:1043px;background:#c5d0d0"></div><div style="position:absolute;left:0px;top:1041px;width:1218px;height:2px;background:#c5d0d0"></div>
</body></html>
